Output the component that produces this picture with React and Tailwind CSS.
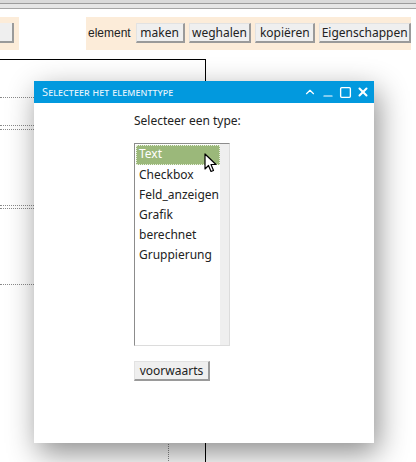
import { ChevronUp, Minus, Square, X } from 'lucide-react';

const TYPES = ['Text', 'Checkbox', 'Feld_anzeigen', 'Grafik', 'berechnet', 'Gruppierung'];

const ToolButton = ({ children, className = '' }) => (
  <button
    className={`h-[20px] p-0 flex items-center justify-center whitespace-nowrap bg-[#efefef] border-t border-l border-[#e2e2e2] border-r-2 border-b-2 border-r-[#9a9a9a] border-b-[#9a9a9a] text-[12px] leading-none text-[#222] font-['Noto_Sans',sans-serif] ${className}`}
  >
    {children}
  </button>
);

const DottedLine = ({ className = '' }) => (
  <div className={`w-[168px] border-t border-dotted border-[#8a8a8a] ${className}`} />
);

const App = () => {
  return (
    <div className="relative w-[416px] h-[462px] overflow-hidden bg-white font-['Noto_Sans',sans-serif]">
      {/* top frame strips */}
      <div className="h-[4px] bg-[#dadada] border-b border-[#9c9c9c]" />
      <div className="h-[5px] bg-[#e6e6e6] border-b border-[#a6a6a6]" />

      {/* toolbar */}
      <div className="mt-[8px] flex h-[33px]">
        <div className="w-[19px] bg-[#fcecd9] flex items-start pt-[6px]">
          <div className="w-[14px] h-[20px] bg-[#efefef] border-r-2 border-b-2 border-[#9a9a9a]" />
        </div>
        <div className="ml-auto mr-[5px] w-[325px] bg-[#fcecd9] flex items-start pt-[6px] pl-[2px] gap-[4px]">
          <span className="text-[12px] leading-[20px] text-[#222] font-['Liberation_Sans',Arial,sans-serif] mr-[1px]">element</span>
          <ToolButton className="w-[49px]">maken</ToolButton>
          <ToolButton className="w-[63px]">weghalen</ToolButton>
          <ToolButton className="w-[60px]">kopiëren</ToolButton>
          <ToolButton className="w-[92px]">Eigenschappen</ToolButton>
        </div>
      </div>

      {/* report canvas behind the dialog */}
      <div className="mt-[9px] w-[206px] h-[420px] border-t border-r border-black flex flex-col">
        <DottedLine className="mt-[37px]" />
        <DottedLine className="mt-[27px]" />
        <DottedLine className="mt-[3px]" />
        <DottedLine className="mt-[75px]" />
        <DottedLine className="mt-[2px]" />
        <DottedLine className="mt-[75px]" />
        <div className="flex-1 w-[169px] border-r border-dotted border-[#8a8a8a]" />
      </div>

      {/* dialog */}
      <div className="absolute left-[34px] top-[81px] w-[340px] h-[362px] bg-white flex flex-col shadow-[4px_10px_28px_rgba(0,0,0,0.45)]">
        <div className="h-[22px] bg-[#0299de] flex items-center pl-[8px] pr-[4px] text-[#e6f4fc]">
          <span className="text-[11px] tracking-[0.1px] [font-variant:small-caps] font-['Noto_Sans',sans-serif]">
            Selecteer het elementtype
          </span>
          <div className="ml-auto flex items-center gap-[4px] text-white">
            <ChevronUp className="w-[14px] h-[14px]" strokeWidth={2} />
            <Minus className="w-[14px] h-[14px] translate-y-[4px]" strokeWidth={2} />
            <Square className="w-[13px] h-[13px]" strokeWidth={2.5} />
            <X className="w-[14px] h-[14px]" strokeWidth={3.5} />
          </div>
        </div>

        <div className="pl-[100px] pt-[9px] flex flex-col items-start text-[12px] text-[#222]">
          <span className="leading-[17px]">Selecteer een type:</span>

          <div className="relative mt-[14px] w-[96px] h-[203px] border-t border-l border-[#8c8c8c] border-r border-b border-r-[#dcdcdc] border-b-[#dcdcdc] flex">
            <div className="flex-1 pl-[1px]">
              {TYPES.map((t, i) => (
                <div
                  key={t}
                  className={`h-[20px] pl-[2px] leading-[16px] ${
                    i === 0
                      ? 'bg-[#9bb87a] text-white border border-dotted border-[#e8f0dc] h-[18px] mt-[1px] mb-[1px]'
                      : 'border border-transparent'
                  }`}
                >
                  {t}
                </div>
              ))}
            </div>
            <div className="w-[13px] bg-[#efefef]" />

            {/* mouse pointer */}
            <svg className="absolute left-[69px] top-[9px]" width="13" height="20" viewBox="0 0 13 20">
              <path d="M1 1 L1 16 L4.5 12.5 L7 18.5 L9.5 17.5 L7 11.5 L12 11.5 Z" fill="white" stroke="black" strokeWidth="1.2" strokeLinejoin="round" />
            </svg>
          </div>

          <ToolButton className="mt-[15px] w-[76px]">voorwaarts</ToolButton>
        </div>
      </div>
    </div>
  );
};

export default App;
